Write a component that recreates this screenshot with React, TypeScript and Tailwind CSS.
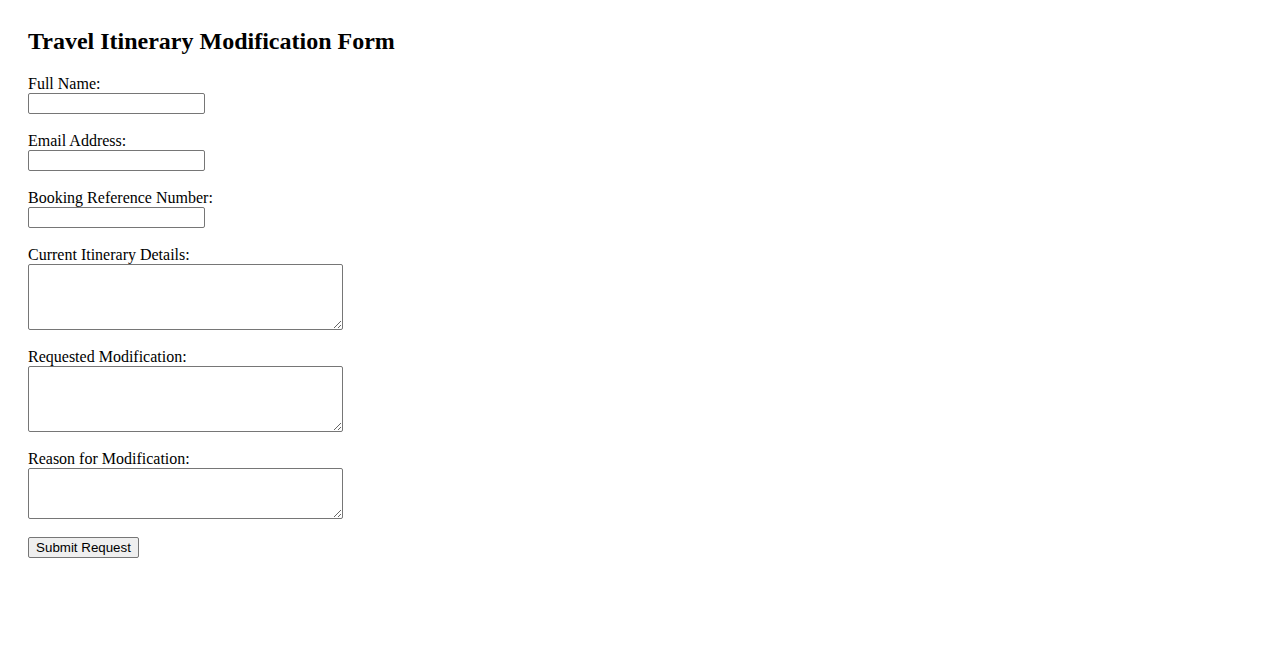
import React from "react";

function Field({ label, children }: { label: string; children: React.ReactNode }) {
  return (
    <div className="mb-[18px] flex flex-col items-start">
      <label className="block text-[16px] leading-[18px]">{label}</label>
      {children}
    </div>
  );
}

const inputCls =
  "block w-[177px] h-[21px] border border-[#767676] rounded-[2px] bg-white px-[2px] text-[13.33px] [font-family:'Liberation_Sans',Arial,sans-serif]";
const areaCls =
  "block w-[315px] border border-[#767676] rounded-[2px] bg-white px-[2px] text-[13.33px] [font-family:'Liberation_Mono',monospace]";

export default function App() {
  return (
    <div className="min-h-[650px] bg-white text-black px-[28px] pt-[27px] [font-family:'Liberation_Serif','Times_New_Roman',serif]">
      <h2 className="text-[24px] font-bold leading-[28px] mb-[20px]">Travel Itinerary Modification Form</h2>
      <form onSubmit={(e) => e.preventDefault()}>
        <Field label="Full Name:">
          <input type="text" className={inputCls} />
        </Field>
        <Field label="Email Address:">
          <input type="email" className={inputCls} />
        </Field>
        <Field label="Booking Reference Number:">
          <input type="text" className={inputCls} />
        </Field>
        <Field label="Current Itinerary Details:">
          <textarea className={areaCls + " h-[66px]"} />
        </Field>
        <Field label="Requested Modification:">
          <textarea className={areaCls + " h-[66px]"} />
        </Field>
        <Field label="Reason for Modification:">
          <textarea className={areaCls + " h-[51px]"} />
        </Field>
        <button
          type="submit"
          className="block w-[111px] h-[21px] px-[6px] border border-[#767676] rounded-[2px] bg-[#efefef] text-[13.33px] leading-[15px] text-black [font-family:'Liberation_Sans',Arial,sans-serif]"
        >
          Submit Request
        </button>
      </form>
    </div>
  );
}
